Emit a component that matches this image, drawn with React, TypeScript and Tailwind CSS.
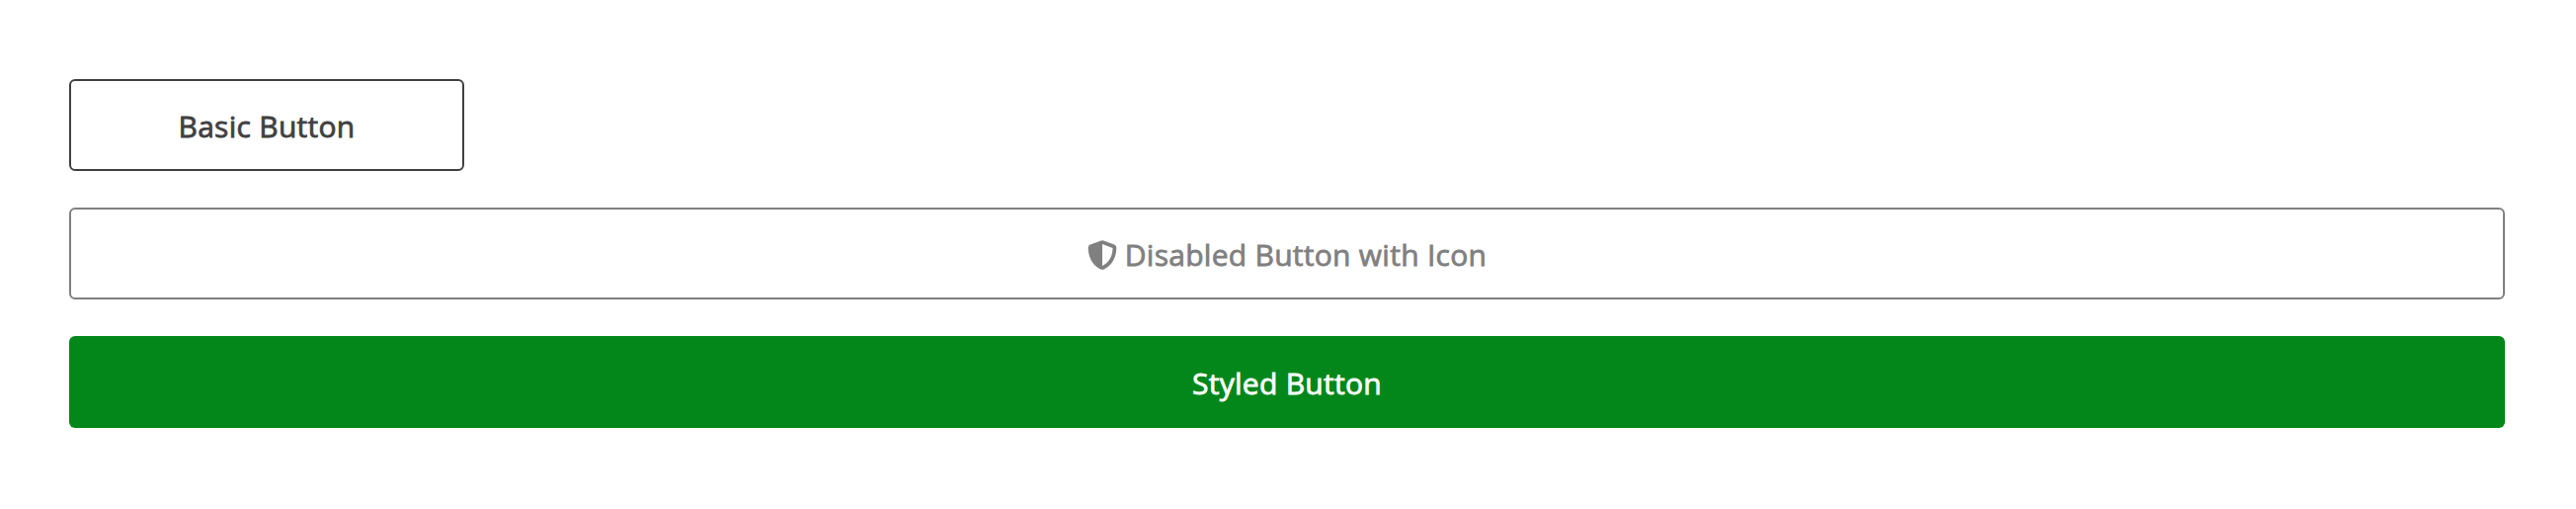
export default function App() {
  return (
    <main className="flex h-[515px] flex-col gap-[37px] bg-white pt-20 pr-[72px] pl-[70px] font-['Open_Sans',sans-serif] text-[30px] leading-none font-medium tracking-[0.28px] [-webkit-text-stroke:0.8px_currentColor]">
      <button className="flex h-[93px] w-[400px] items-center justify-center rounded-md border-2 border-[#404040] pt-0.5 text-[#404040]">
        Basic Button
      </button>
      <button disabled className="flex h-[93px] w-full items-center justify-center gap-2 rounded-md border-2 border-[#808080] pt-0.5 text-[#808080]">
        <svg viewBox="0 0 30 30" className="size-[30px]" fill="currentColor">
          <path fillRule="evenodd" d="M13.800 .4Q15 -.1 16.200 .4L27.300 4.500Q29.300 5.300 29.300 7.500C29.300 17 25 25.500 16.700 29.400Q15 30.200 13.300 29.400C5 25.500 .7 17 .7 7.500Q.7 5.300 2.700 4.500ZM15 4V26C22 22.500 25.400 16 25.500 8Z" />
        </svg>
        <span>Disabled Button with Icon</span>
      </button>
      <button className="flex h-[93px] w-full items-center justify-center rounded-md bg-[#03871a] pt-0.5 text-white">
        Styled Button
      </button>
    </main>
  );
}
